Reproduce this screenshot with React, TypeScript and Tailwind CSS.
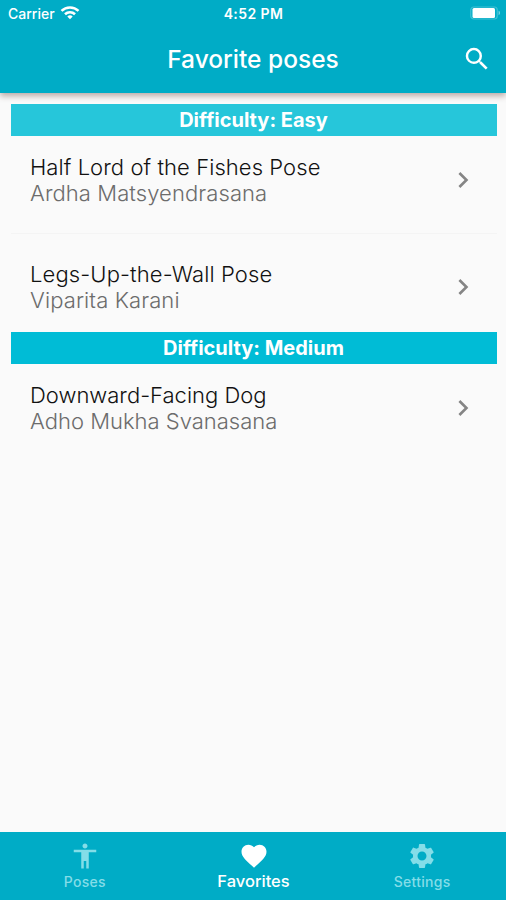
import type { ReactNode } from "react";

type Pose = { name: string; sanskrit: string; tracking: string; subTracking: string };

function Icon({ d, className }: { d: string; className: string }) {
  return (
    <svg viewBox="0 0 24 24" fill="currentColor" className={className} aria-hidden="true">
      <path d={d} />
    </svg>
  );
}

const SEARCH =
  "M15.5 14h-.79l-.28-.27A6.471 6.471 0 0 0 16 9.5 6.5 6.5 0 1 0 9.5 16c1.61 0 3.09-.59 4.23-1.57l.27.28v.79l5 4.99L20.49 19l-4.99-5zm-6 0C7.01 14 5 11.99 5 9.5S7.01 5 9.5 5 14 7.01 14 9.5 11.99 14 9.5 14z";
const CHEVRON = "M10 6L8.59 7.41 13.17 12l-4.58 4.59L10 18l6-6z";
const PERSON =
  "M12 2c1.1 0 2 .9 2 2s-.9 2-2 2-2-.9-2-2 .9-2 2-2zm9 7h-6v13h-2v-6h-2v6H9V9H3V7h18v2z";
const HEART =
  "M12 21.35l-1.45-1.32C5.4 15.36 2 12.28 2 8.5 2 5.42 4.42 3 7.5 3c1.74 0 3.41.81 4.5 2.09C13.09 3.81 14.76 3 16.5 3 19.58 3 22 5.42 22 8.5c0 3.78-3.4 6.86-8.55 11.54L12 21.35z";
const GEAR =
  "M19.14 12.94c.04-.3.06-.61.06-.94 0-.32-.02-.64-.07-.94l2.03-1.58c.18-.14.23-.41.12-.61l-1.92-3.32c-.12-.22-.37-.29-.59-.22l-2.39.96c-.5-.38-1.03-.7-1.62-.94l-.36-2.54c-.04-.24-.24-.41-.48-.41h-3.84c-.24 0-.43.17-.47.41l-.36 2.54c-.59.24-1.13.57-1.62.94l-2.39-.96c-.22-.08-.47 0-.59.22L2.74 8.87c-.12.21-.08.47.12.61l2.03 1.58c-.05.3-.09.63-.09.94s.02.64.07.94l-2.03 1.58c-.18.14-.23.41-.12.61l1.92 3.32c.12.22.37.29.59.22l2.39-.96c.5.38 1.03.7 1.62.94l.36 2.54c.05.24.24.41.48.41h3.84c.24 0 .44-.17.47-.41l.36-2.54c.59-.24 1.13-.56 1.62-.94l2.39.96c.22.08.47 0 .59-.22l1.92-3.32c.12-.22.07-.47-.12-.61l-2.01-1.58zM12 15.6c-1.98 0-3.6-1.62-3.6-3.6s1.62-3.6 3.6-3.6 3.6 1.62 3.6 3.6-1.62 3.6-3.6 3.6z";

function Wifi() {
  return (
    <svg viewBox="0 0 20 14" className="ml-[5px] h-[14px] w-5" fill="none" stroke="white" strokeWidth="2.6">
      <path d="M1.5 4.9a12.2 12.2 0 0 1 17 0" />
      <path d="M5 8.3a7.2 7.2 0 0 1 10 0" />
      <path d="M10 13.2 7.3 10.5a3.9 3.9 0 0 1 5.4 0z" fill="white" stroke="none" />
    </svg>
  );
}

function Battery() {
  return (
    <svg viewBox="0 0 31 14" className="h-[14px] w-[31px]">
      <rect x="0.75" y="1" width="26.5" height="12" rx="3" fill="none" stroke="white" strokeOpacity="0.25" strokeWidth="1.2" />
      <rect x="2.5" y="2" width="22.5" height="10" rx="1.5" fill="white" />
      <path d="M28.6 4.8c1.8.6 1.8 3.8 0 4.4z" fill="white" fillOpacity="0.5" />
    </svg>
  );
}

function Section({ title, color, children }: { title: string; color: string; children: ReactNode }) {
  return (
    <section>
      <h2 className={`flex h-8 items-center justify-center pr-px text-[20px] font-bold text-white ${color}`}>{title}</h2>
      {children}
    </section>
  );
}

function PoseRow({ pose }: { pose: Pose }) {
  return (
    <div className="flex h-[88px] items-center justify-between pr-[18px] pl-[19px]">
      <div className="text-[22px] leading-[26px] font-light whitespace-nowrap">
        <div className={`text-[#111] ${pose.tracking}`}>{pose.name}</div>
        <div className={`text-[#6c6c6c] ${pose.subTracking}`}>{pose.sanskrit}</div>
      </div>
      <Icon d={CHEVRON} className="size-8 text-[#858585]" />
    </div>
  );
}

function Tab({ label, icon, active = false }: { label: string; icon: string; active?: boolean }) {
  return (
    <div className={`flex flex-1 flex-col items-center pt-[9px] pl-px font-medium ${active ? "text-white" : "text-[#84dde8]"}`}>
      <Icon d={icon} className="size-[30px]" />
      <span className={active ? "text-[16.5px] leading-5" : "mt-px text-[14px] leading-5 tracking-[0.02em]"}>{label}</span>
    </div>
  );
}

export default function App() {
  return (
    <div className="flex h-[900px] w-[506px] flex-col overflow-hidden bg-[#fafafa] font-['Inter',sans-serif]">
      <header className="relative z-10 h-[93px] shrink-0 bg-[#00acc6] text-white shadow-[0_3px_6px_rgba(70,20,10,0.35)]">
        <div className="grid h-[26px] grid-cols-[1fr_auto_1fr] items-center pr-[5px] pl-[8px] text-[14px] font-medium">
          <div className="flex items-center">Carrier<Wifi /></div>
          <div className="pr-[2px] text-center text-[14px] font-semibold tracking-[0.03em]">4:52 PM</div>
          <div className="flex justify-end"><Battery /></div>
        </div>
        <div className="grid h-[66px] grid-cols-[1fr_auto_1fr] items-center">
          <h1 className="col-start-2 text-[24.5px] font-medium">Favorite poses</h1>
          <Icon d={SEARCH} className="mr-[14px] size-[30px] justify-self-end" />
        </div>
      </header>
      <main className="flex-1 pt-[11px] pr-[9px] pl-[11px]">
        <Section title="Difficulty: Easy" color="bg-[#26c6da]">
          <PoseRow pose={{ name: "Half Lord of the Fishes Pose", sanskrit: "Ardha Matsyendrasana", tracking: "tracking-[0.07px]", subTracking: "tracking-[0.08px]" }} />
          <div className="mt-[9px] mb-[9px] h-px bg-[#f4f4f4]" />
          <PoseRow pose={{ name: "Legs-Up-the-Wall Pose", sanskrit: "Viparita Karani", tracking: "tracking-[0.12px]", subTracking: "tracking-[0.1px]" }} />
          <div className="h-px" />
        </Section>
        <Section title="Difficulty: Medium" color="bg-[#00bcd6]">
          <PoseRow pose={{ name: "Downward-Facing Dog", sanskrit: "Adho Mukha Svanasana", tracking: "tracking-normal", subTracking: "tracking-normal" }} />
        </Section>
      </main>
      <nav className="flex h-[68px] shrink-0 bg-[#00acc6]">
        <Tab label="Poses" icon={PERSON} />
        <Tab label="Favorites" icon={HEART} active />
        <Tab label="Settings" icon={GEAR} />
      </nav>
    </div>
  );
}
